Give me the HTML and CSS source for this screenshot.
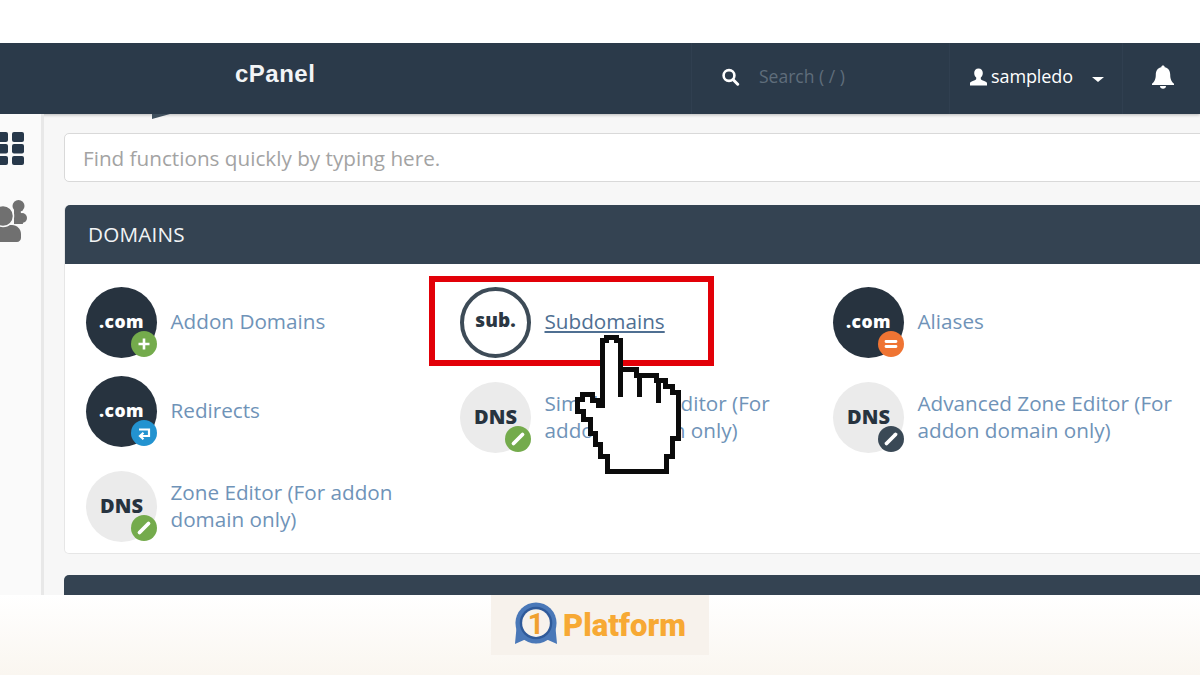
FILE: index.html

```html
<!DOCTYPE html>
<html>
<head lang="en">
    <meta charset="UTF-8">
    <title>cPanel subdomains</title>
    <link rel="stylesheet" href="styles.css">
</head>
<body>
<div class="top-gap"></div>

<div class="shot">
    <!-- header bar -->
    <div class="header">
        <div class="brand">cPanel</div>
        <div class="head-search">
            <svg class="ico-search" viewBox="0 0 18 18"><circle cx="7.500" cy="7.500" r="5.400" fill="none" stroke="#fff" stroke-width="2.600"/><path d="M11.500 11.500L16.200 16.200" stroke="#fff" stroke-width="3" stroke-linecap="round"/></svg>
            <span class="head-search-text">Search ( / )</span>
        </div>
        <div class="head-user">
            <svg class="ico-user" viewBox="0 0 18 18"><path d="M9 .5c2.700 0 4.300 2 4.300 4.600 0 2-.9 3.700-2 4.500v1.500c0 .8 1.500 1.200 3.400 2 1.500.6 2.800 1.200 2.800 2.200v2.200H.5v-2.200c0-1 1.300-1.600 2.800-2.200 1.900-.8 3.400-1.200 3.400-2V9.600c-1.100-.8-2-2.500-2-4.500C4.700 2.500 6.300.5 9 .5z" fill="#fff"/></svg>
            <span class="head-user-name">sampledo</span>
            <span class="caret"></span>
        </div>
        <div class="head-bell">
            <svg class="ico-bell" viewBox="0 0 24 24"><path d="M12 .5c1 0 1.700.7 1.700 1.700 3.600.7 5.500 3.500 5.500 7.300 0 5 1.500 7.300 3.800 9.200v1.300H1v-1.300c2.300-1.900 3.800-4.200 3.800-9.200 0-3.800 1.900-6.600 5.500-7.300C10.300 1.200 11 .5 12 .5z" fill="#fff"/><path d="M9 21h6c0 1.700-1.300 2.800-3 2.800S9 22.700 9 21z" fill="#fff"/></svg>
        </div>
    </div>
    <div class="head-tab"></div>

    <div class="main">
        <!-- left rail, icons are cut by the edge -->
        <div class="rail">
            <svg class="ico-grid" viewBox="0 0 25 34">
                <rect x="-4" y="0" width="12" height="10" rx="2"/><rect x="12" y="0" width="12" height="10" rx="2"/>
                <rect x="-4" y="12" width="12" height="9.500" rx="2"/><rect x="12" y="12" width="12" height="9.500" rx="2"/>
                <rect x="-4" y="24" width="12" height="9" rx="2"/><rect x="12" y="24" width="12" height="9" rx="2"/>
            </svg>
            <svg class="ico-users" viewBox="0 0 28 43">
                <circle cx="18.500" cy="6" r="6"/>
                <circle cx="22" cy="18" r="5"/>
                <path d="M14 8h6l3 16h-9z"/>
                <path d="M-6 25h18c5 0 9 4 9 9v4c0 2-2 4-4 4H-6z"/>
                <circle cx="3" cy="16" r="10.500" stroke="#fafafa" stroke-width="1.500"/>
            </svg>
        </div>

        <div class="content">
            <div class="find-box">Find functions quickly by typing here.</div>

            <div class="panel">
                <div class="panel-head">DOMAINS</div>
                <div class="panel-grid">
                    <div class="tile">
                        <div class="disc disc-com">.com<span class="badge badge-green"><svg viewBox="0 0 26 26"><path d="M13 7.500v11M7.500 13h11" stroke="#fff" stroke-width="2.600"/></svg></span></div>
                        <a class="tile-link" href="#">Addon Domains</a>
                    </div>
                    <div class="tile">
                        <div class="disc disc-sub">sub.</div>
                        <a class="tile-link tile-link-on" href="#">Subdomains</a>
                    </div>
                    <div class="tile">
                        <div class="disc disc-com">.com<span class="badge badge-orange"><svg viewBox="0 0 26 26"><path d="M8 10.500h10M8 15.500h10" stroke="#fff" stroke-width="2.800" stroke-linecap="round"/></svg></span></div>
                        <a class="tile-link" href="#">Aliases</a>
                    </div>

                    <div class="tile">
                        <div class="disc disc-com">.com<span class="badge badge-blue"><svg viewBox="0 0 26 26"><path d="M8 9.500h10v6.500h-8M12.500 12.800L9 16l3.500 3.200" fill="none" stroke="#fff" stroke-width="2.200"/></svg></span></div>
                        <a class="tile-link" href="#">Redirects</a>
                    </div>
                    <div class="tile tile-dns">
                        <div class="disc disc-dns">DNS<span class="badge badge-green"><svg viewBox="0 0 26 26"><path d="M8.500 17.500L17.500 8.500" stroke="#fff" stroke-width="3.800" stroke-linecap="round"/></svg></span></div>
                        <a class="tile-link" href="#">Simple Zone Editor (For addon domain only)</a>
                    </div>
                    <div class="tile tile-dns">
                        <div class="disc disc-dns">DNS<span class="badge badge-dark"><svg viewBox="0 0 26 26"><path d="M8.500 17.500L17.500 8.500" stroke="#fff" stroke-width="3.800" stroke-linecap="round"/></svg></span></div>
                        <a class="tile-link" href="#">Advanced Zone Editor (For addon domain only)</a>
                    </div>

                    <div class="tile tile-dns">
                        <div class="disc disc-dns">DNS<span class="badge badge-green"><svg viewBox="0 0 26 26"><path d="M8.500 17.500L17.500 8.500" stroke="#fff" stroke-width="3.800" stroke-linecap="round"/></svg></span></div>
                        <a class="tile-link" href="#">Zone Editor (For addon domain only)</a>
                    </div>
                </div>
            </div>

            <div class="panel-next"></div>
        </div>
    </div>

    <!-- annotation over the screenshot -->
    <div class="mark-box"></div>
    <svg class="mark-hand" viewBox="570 330 115 150" shape-rendering="crispEdges">
        <path d="M602 405V340H606V337H616V340H620V369H636V375H656V380H665V386H672V392H678V438H672V456H666V471H607V456H600V444H595V433H590V419H583V411H577V399H582V394H592V400H598V405Z" fill="#fff" stroke="#0b0b0b" stroke-width="5"/>
        <path d="M620 369V397M639 375V397M658 380V403" fill="none" stroke="#0b0b0b" stroke-width="5"/>
    </svg>
</div>

<div class="footer">
    <div class="logo">
        <svg class="logo-mark" viewBox="0 0 46 46">
            <path d="M3 23L1 44L11 39.500L23 43L35 39.500L45 44L43 23Z" fill="#4a78b8"/>
            <circle cx="23" cy="22" r="21.500" fill="#4a78b8"/>
            <circle cx="23" cy="22" r="17" fill="#2f5a9a"/>
            <circle cx="23" cy="22" r="14.500" fill="#f7f2ec"/>
            <text class="logo-one" x="23" y="33" text-anchor="middle">1</text>
        </svg>
        <span class="logo-text">Platform</span>
    </div>
</div>
</body>
</html>
```

FILE: styles.css

```css
@charset "UTF-8";
/*initial reset*/
body,div,a,span{margin:0;padding:0}
body{
    width:1200px;
    height:675px;
    overflow:hidden;
    background:#fff;
    font:20.700px/27px "Open Sans", "Liberation Sans", sans-serif;
}
a{text-decoration:none}

.top-gap{
    height:43px;
}
.shot{
    height:552px;
    position:relative;
    overflow:hidden;
    background:#f7f7f7;
}

/* header */
.header{
    height:71px;
    display:flex;
    align-items:stretch;
    background:#2b3a4a;
    box-shadow:0 1px 3px rgba(0,0,0,.25);
    color:#fff;
}
.brand{
    width:691px;
    box-sizing:border-box;
    padding:0 0 0 235px;
    font:bold 24px/61px "Liberation Sans", sans-serif;
    letter-spacing:.5px;
    color:#f2f4f6;
}
.head-search{
    width:258px;
    box-sizing:border-box;
    display:flex;
    align-items:center;
    padding:0 0 4px 29px;
    border-left:1px solid #303f50;
}
.ico-search{
    width:19px;
    height:18px;
    margin-right:19px;
}
.head-search-text{
    font-size:17.500px;
    color:#5f6d7b;
}
.head-user{
    width:173px;
    box-sizing:border-box;
    display:flex;
    align-items:center;
    padding:0 0 4px 19px;
    border-left:1px solid #303f50;
}
.ico-user{
    width:19px;
    height:18px;
    margin-right:3px;
}
.head-user-name{
    font-size:18px;
    letter-spacing:-.1px;
}
.caret{
    width:0;
    height:0;
    margin:5px 0 0 19px;
    border-top:5px solid #fff;
    border-left:6px solid transparent;
    border-right:6px solid transparent;
}
.head-bell{
    flex:1;
    display:flex;
    align-items:center;
    padding:0 0 4px 28px;
    border-left:1px solid #303f50;
}
.ico-bell{
    width:24px;
    height:24px;
}
.head-tab{
    position:absolute;
    left:152px;
    top:71px;
    width:18px;
    height:5px;
    background:#3f4f5d;
    clip-path:polygon(0 0,100% 0,0 100%);
}

/* body of the page */
.main{
    display:flex;
    height:481px;
}
.rail{
    width:41px;
    flex:none;
    padding-top:18px;
    background:#fafafa;
    border-right:3px solid #e8e8e8;
}
.ico-grid{
    display:block;
    width:25px;
    height:34px;
    fill:#27384a;
}
.ico-users{
    display:block;
    width:28px;
    height:43px;
    margin-top:34px;
    fill:#707070;
}
.content{
    flex:1;
    padding:19px 0 0 20px;
    min-width:0;
}
.find-box{
    height:47px;
    width:1160px;
    padding-left:18px;
    background:#fff;
    border:1px solid #d9d9d9;
    border-radius:5px;
    line-height:48px;
    color:#a3a3a3;
}
.panel{
    width:1180px;
    margin-top:23px;
    background:#fff;
    border:1px solid #e6e6e6;
    border-top:0;
    border-radius:5px;
    height:349px;
    box-sizing:border-box;
}
.panel-head{
    height:59px;
    padding-left:23px;
    background:#344352;
    border-radius:5px 5px 0 0;
    line-height:58px;
    letter-spacing:.2px;
    color:#f1f3f5;
}
.panel-grid{
    display:grid;
    grid-template-columns:374px 373px 373px;
    grid-auto-rows:89px;
    padding:23px 0 0 21px;
}
.tile{
    display:flex;
    align-items:center;
    align-self:start;
    gap:13.500px;
}
.tile-dns{
    margin-top:6px;
}
.tile-link{
    max-width:262px;
    padding-bottom:2px;
    color:#6f93b8;
}
.tile-link-on{
    color:#4f6f92;
    text-decoration:underline;
}
.panel-next{
    width:1180px;
    height:40px;
    margin-top:21px;
    background:#344352;
    border-radius:5px 5px 0 0;
}

/* round icons */
.disc{
    width:71px;
    height:71px;
    flex:none;
    box-sizing:border-box;
    border-radius:50%;
    position:relative;
    text-align:center;
    font-family:"Open Sans", sans-serif;
    font-weight:800;
}
.disc-com{
    background:#27333f;
    color:#fff;
    font-size:17.500px;
    letter-spacing:.5px;
    line-height:68px;
}
.disc-sub{
    background:#fff;
    border:4.500px solid #3d4b57;
    color:#2b3743;
    font-size:19px;
    line-height:58px;
}
.disc-dns{
    background:#ebebeb;
    color:#27333f;
    font-size:20px;
    line-height:69px;
}
.badge{
    position:absolute;
    right:0;
    bottom:1px;
    width:26px;
    height:26px;
    border-radius:50%;
}
.badge svg{
    display:block;
    width:26px;
    height:26px;
}
.badge-green{background:#74ab4c}
.badge-orange{background:#ef7433}
.badge-blue{background:#2393d0}
.badge-dark{background:#3a4956}

/* red frame and hand */
.mark-box{
    position:absolute;
    left:429px;
    top:233px;
    width:273px;
    height:78px;
    border:6.500px solid #e20008;
}
.mark-hand{
    position:absolute;
    left:570px;
    top:287px;
    width:115px;
    height:150px;
}

/* footer strip */
.footer{
    height:80px;
    display:flex;
    justify-content:center;
    align-items:flex-start;
    background:linear-gradient(#fff,#faf6f0);
}
.logo{
    width:218px;
    height:60px;
    box-sizing:border-box;
    display:flex;
    align-items:center;
    padding-left:23px;
    gap:5px;
    background:#f7f2ec;
}
.logo-mark{
    width:44px;
    height:44px;
    margin-top:-2px;
    flex:none;
}
.logo-one{
    font:bold 30px "Roboto", sans-serif;
    fill:#f0a030;
}
.logo-text{
    font:900 31px/1 "Roboto", sans-serif;
    color:#f7a934;
}
```
